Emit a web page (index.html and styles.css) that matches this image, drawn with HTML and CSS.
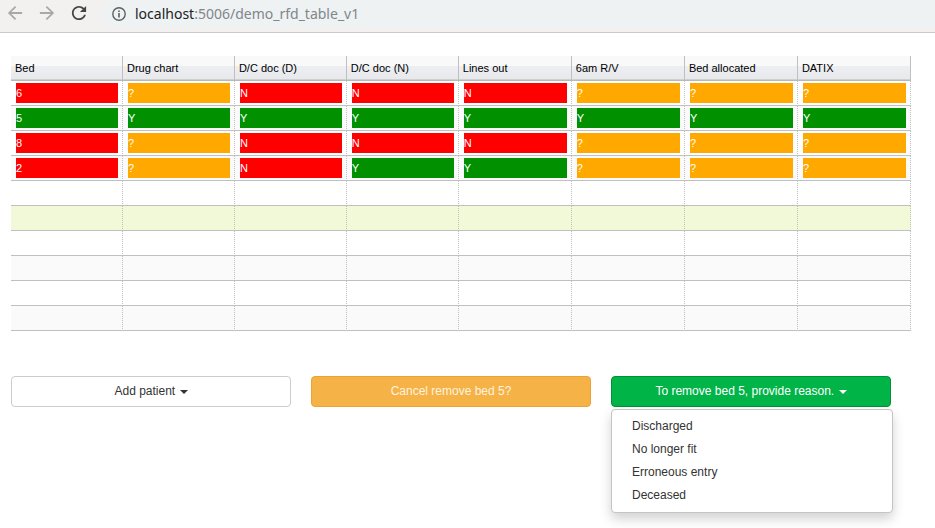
FILE: index.html
```html
<!DOCTYPE html>
<html lang="en">
<head>
<meta charset="utf-8">
<title>demo_rfd_table_v1</title>
<link rel="stylesheet" href="styles.css">
</head>
<body>
<header class="toolbar">
  <nav class="history">
    <button class="nav" type="button" aria-label="Back"><svg viewBox="3 3 18 18" fill="#a9a8a7"><path d="M20 11H7.830l5.590-5.590L12 4l-8 8 8 8 1.410-1.410L7.830 13H20z"/></svg></button>
    <button class="nav" type="button" aria-label="Forward"><svg viewBox="3 3 18 18" fill="#a9a8a7"><path d="M12 4l-1.410 1.410L16.170 11H4v2h12.170l-5.580 5.590L12 20l8-8z"/></svg></button>
    <button class="nav" type="button" aria-label="Reload"><svg viewBox="3 3 18 18" fill="#454545"><path d="M17.650 6.350C16.200 4.900 14.210 4 12 4c-4.420 0-7.990 3.580-7.990 8s3.570 8 7.990 8c3.730 0 6.840-2.550 7.730-6h-2.080c-.82 2.330-3.040 4-5.650 4-3.310 0-6-2.690-6-6s2.690-6 6-6c1.660 0 3.140.69 4.220 1.780L13 11h7V4z"/></svg></button>
  </nav>
  <div class="address">
    <svg class="info" viewBox="0 0 14 14" fill="none" stroke="#5c6064"><circle cx="7" cy="7" r="6.200" stroke-width="1.400"/><path d="M7 6v4.500M7 3.500V5" stroke-width="1.600"/></svg>
    <span class="url"><span class="host">localhost</span>:5006/demo_rfd_table_v1</span>
  </div>
</header>
<main class="page">
  <table class="grid">
    <colgroup><col class="narrow" span="4"><col class="wide" span="4"></colgroup>
    <thead>
      <tr><th>Bed</th><th>Drug chart</th><th>D/C doc (D)</th><th>D/C doc (N)</th><th>Lines out</th><th>6am R/V</th><th>Bed allocated</th><th>DATIX</th></tr>
    </thead>
    <tbody>
      <tr><td><div class="no">6</div></td><td><div class="unknown">?</div></td><td><div class="no">N</div></td><td><div class="no">N</div></td><td><div class="no">N</div></td><td><div class="unknown">?</div></td><td><div class="unknown">?</div></td><td><div class="unknown">?</div></td></tr>
      <tr><td><div class="yes">5</div></td><td><div class="yes">Y</div></td><td><div class="yes">Y</div></td><td><div class="yes">Y</div></td><td><div class="yes">Y</div></td><td><div class="yes">Y</div></td><td><div class="yes">Y</div></td><td><div class="yes">Y</div></td></tr>
      <tr><td><div class="no">8</div></td><td><div class="unknown">?</div></td><td><div class="no">N</div></td><td><div class="no">N</div></td><td><div class="no">N</div></td><td><div class="unknown">?</div></td><td><div class="unknown">?</div></td><td><div class="unknown">?</div></td></tr>
      <tr><td><div class="no">2</div></td><td><div class="unknown">?</div></td><td><div class="no">N</div></td><td><div class="yes">Y</div></td><td><div class="yes">Y</div></td><td><div class="unknown">?</div></td><td><div class="unknown">?</div></td><td><div class="unknown">?</div></td></tr>
      <tr><td></td><td></td><td></td><td></td><td></td><td></td><td></td><td></td></tr>
      <tr class="hovered"><td></td><td></td><td></td><td></td><td></td><td></td><td></td><td></td></tr>
      <tr><td></td><td></td><td></td><td></td><td></td><td></td><td></td><td></td></tr>
      <tr><td></td><td></td><td></td><td></td><td></td><td></td><td></td><td></td></tr>
      <tr><td></td><td></td><td></td><td></td><td></td><td></td><td></td><td></td></tr>
      <tr><td></td><td></td><td></td><td></td><td></td><td></td><td></td><td></td></tr>
    </tbody>
  </table>
  <div class="actions">
    <button class="btn" type="button">Add patient <span class="caret"></span></button>
    <button class="btn warning" type="button">Cancel remove bed 5?</button>
    <div class="dropdown">
      <button class="btn success" type="button" aria-expanded="true">To remove bed 5, provide reason. <span class="caret"></span></button>
      <ul class="menu">
        <li><a href="#">Discharged</a></li>
        <li><a href="#">No longer fit</a></li>
        <li><a href="#">Erroneous entry</a></li>
        <li><a href="#">Deceased</a></li>
      </ul>
    </div>
  </div>
</main>
</body>
</html>
```
FILE: styles.css
```css
* { box-sizing: border-box; }

body {
  min-height: 100vh;
  margin: 0;
  background: #fff;
  color: #333;
  font: 12px/17px "Liberation Sans", Arial, sans-serif;
}

.toolbar {
  display: flex;
  align-items: flex-start;
  gap: 13px;
  height: 33px;
  padding-left: 7px;
  background: #f2f1f0;
  border-bottom: 1px solid #cbcac9;
}

.history {
  display: flex;
  gap: 16px;
}

.nav {
  width: 16px;
  height: 26px;
  padding: 0;
  border: 0;
  background: none;
}

.nav svg { display: block; width: 16px; height: 16px; }

.address {
  display: flex;
  flex: 1;
  align-items: center;
  gap: 9px;
  height: 28px;
  padding-left: 12px;
  border-radius: 14px 0 0 14px;
  background: #eff2f3;
}

.info { width: 14px; height: 14px; }

.url {
  color: #80868b;
  font: 14px/20px "Noto Sans", "Open Sans", sans-serif;
}

.host { color: #202124; }

.page { padding: 23px 24px 24px 11px; }

.grid {
  width: 100%;
  table-layout: fixed;
  border-collapse: separate;
  border-spacing: 0;
  font-size: 11px;
  line-height: 20px;
}

.narrow { width: 12.44%; }
.wide { width: 12.56%; }

.grid th {
  height: 25px;
  padding: 2px 4px;
  border-right: 1px solid silver;
  border-bottom: 1px solid #b8b8b8;
  background: linear-gradient(#f9f9f9 0 41%, #edeff3 42%, #e8e9eb 95%, #d0d0d0 96%);
  color: #000;
  font-weight: normal;
  text-align: left;
}

.grid td {
  height: 25px;
  padding: 2px 4px 2px 5px;
  border-right: 1px dotted silver;
  border-bottom: 1px solid silver;
  color: #fff;
}

.grid tbody tr:nth-child(even) { background: #fafafa; }
.grid tbody .hovered:nth-child(even) { background: #f2f9d9; }

.no { background: #f00; }
.yes { background: #009000; }
.unknown { background: #ffa800; }

.actions {
  display: grid;
  grid-template-columns: repeat(3, 1fr);
  gap: 20px;
  margin: 45px 20px 0 0;
}

.btn {
  width: 100%;
  padding: 6px 12px;
  border: 1px solid #ccc;
  border-radius: 4px;
  background: #fff;
  color: #333;
  font: inherit;
}

.warning { border-color: #eea236; background: #f5b247; color: #fff3df; }
.success { border-color: #009137; background: #00b447; color: #fff; }

.caret {
  display: inline-block;
  margin-left: 1px;
  border: 4px solid transparent;
  border-top-color: currentColor;
  border-bottom: 0;
  vertical-align: middle;
}

.dropdown { position: relative; }

.menu {
  position: absolute;
  top: 100%;
  left: 0;
  width: calc(100% + 2px);
  margin: 2px 0 0;
  padding: 5px 0;
  border: 1px solid #c4c4c4;
  border-radius: 4px;
  background: #fff;
  box-shadow: 0 6px 12px rgba(0, 0, 0, .18);
  list-style: none;
}

.menu a {
  display: block;
  padding: 3px 20px;
  color: #333;
  text-decoration: none;
}
```
